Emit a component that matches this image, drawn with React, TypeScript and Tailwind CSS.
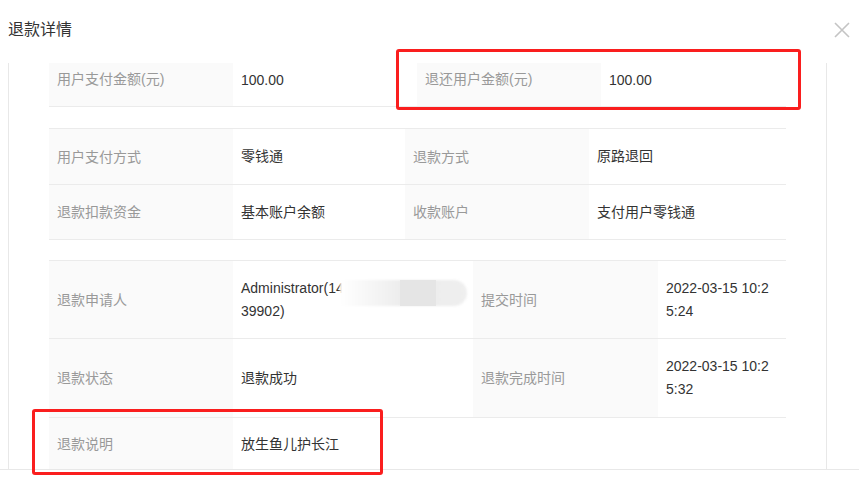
import React from 'react'

const font = { fontFamily: '"Liberation Sans", "Noto Sans CJK SC", sans-serif' }

function Label({ w, children }: { w: string; children: React.ReactNode }) {
  return <div className={`${w} shrink-0 bg-[#fafafa] px-2 flex items-center text-[#999]`}>{children}</div>
}

function Value({ w, children }: { w: string; children: React.ReactNode }) {
  return <div className={`${w} px-2 flex items-center text-[#333] leading-[23px]`}>{children}</div>
}

export default function App() {
  return (
    <div className="w-[859px] h-[477px] bg-white relative overflow-hidden text-sm" style={font}>
      <div className="h-[63px] flex items-center justify-between pl-2 pr-[9px] pb-[3px]">
        <div className="text-base text-[#333]">退款详情</div>
        <svg width="16" height="16" viewBox="0 0 16 16" className="text-[#c4c4c4]">
          <path d="M1 1L15 15M15 1L1 15" stroke="currentColor" strokeWidth="1.6" />
        </svg>
      </div>

      <div className="ml-2 w-[819px] h-[406px] border-x border-[#e8e8e8] overflow-hidden">
        <div className="pl-10 w-[777px] -mt-[12px]">
          <div className="mb-[21px]">
            <div className="flex h-[56px] border-b border-[#ebebeb]">
              <Label w="w-[184px]">用户支付金额(元)</Label>
              <Value w="w-[184px] pt-[3px]">100.00</Value>
              <Label w="w-[184px]">退还用户金额(元)</Label>
              <Value w="flex-1 pt-[3px]">100.00</Value>
            </div>
          </div>

          <div className="mb-[20px] border-t border-[#ebebeb]">
            <div className="flex h-[56px] border-b border-[#ebebeb]">
              <Label w="w-[184px]">用户支付方式</Label>
              <Value w="w-[172px]">零钱通</Value>
              <Label w="w-[184px]">退款方式</Label>
              <Value w="flex-1">原路退回</Value>
            </div>
            <div className="flex h-[55px] border-b border-[#ebebeb]">
              <Label w="w-[184px]">退款扣款资金</Label>
              <Value w="w-[172px]">基本账户余额</Value>
              <Label w="w-[184px]">收款账户</Label>
              <Value w="flex-1">支付用户零钱通</Value>
            </div>
          </div>

          <div className="border-t border-[#ebebeb]">
            <div className="flex h-[78px] border-b border-[#ebebeb]">
              <Label w="w-[184px]">退款申请人</Label>
              <Value w="w-[240px] relative">
                <div>
                  Administrator(14<br />39902)
                </div>
                <div className="absolute left-[107px] top-[19px] w-[127px] h-[26px] rounded-r-[13px] bg-gradient-to-r from-white via-[#ececec] to-[#efefef] blur-[1px]" />
                <div className="absolute left-[167px] top-[19px] w-[36px] h-[26px] bg-[#e5e5e5] blur-[0.5px]" />
              </Value>
              <Label w="w-[185px]">提交时间</Label>
              <Value w="flex-1">
                <div>
                  2022-03-15 10:2<br />5:24
                </div>
              </Value>
            </div>
            <div className="flex h-[79px] border-b border-[#ebebeb]">
              <Label w="w-[184px]">退款状态</Label>
              <Value w="w-[240px]">退款成功</Value>
              <Label w="w-[185px]">退款完成时间</Label>
              <Value w="flex-1">
                <div>
                  2022-03-15 10:2<br />5:32
                </div>
              </Value>
            </div>
            <div className="flex h-[52px]">
              <Label w="w-[184px]">退款说明</Label>
              <Value w="flex-1">放生鱼儿护长江</Value>
            </div>
          </div>
        </div>
      </div>

      <div className="border-t border-[#e8e8e8] h-[8px]" />

      <div className="absolute left-[396px] top-[49px] w-[405px] h-[61px] border-[3px] border-[#fa1e1e] rounded-[3px]" />
      <div className="absolute left-[32px] top-[409px] w-[351px] h-[66px] border-[3px] border-[#fa1e1e] rounded-[3px]" />
    </div>
  )
}
